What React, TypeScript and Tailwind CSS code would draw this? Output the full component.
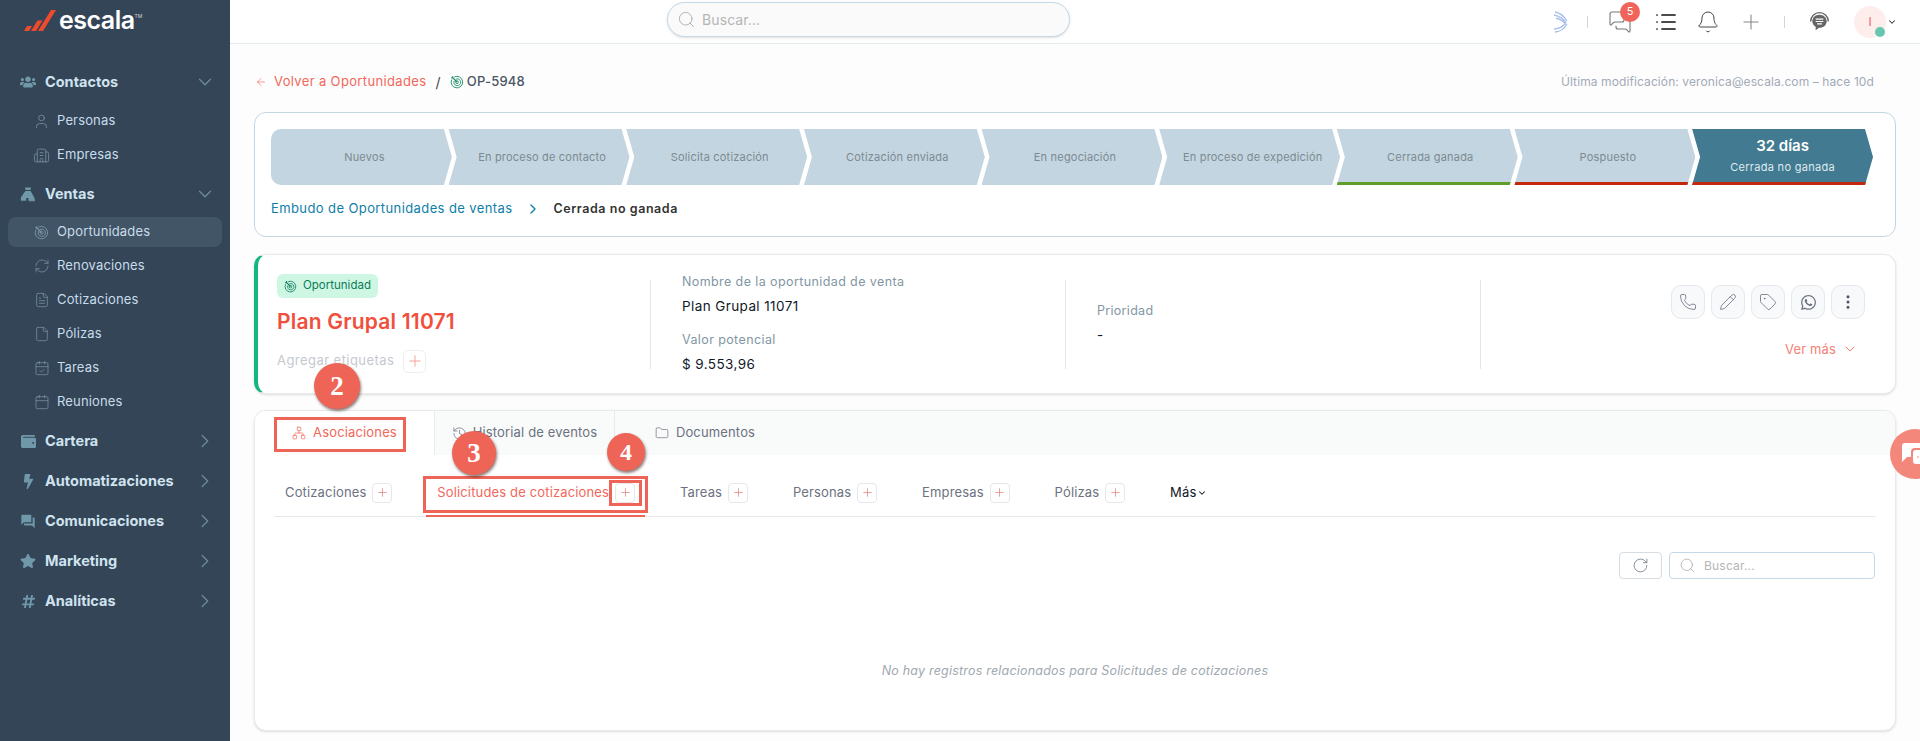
import React from 'react'
import {
  Bell, Building2, Calendar, CalendarCheck, ChevronDown, ChevronRight, File, FileText, Folder, History, List,
  MessagesSquare, MoreVertical, Network, Pencil, Phone, Plus, RefreshCw, RotateCw, Search, Tag, User, ArrowLeft,
} from 'lucide-react'
import { FaBolt, FaHashtag, FaStar, FaUsers, FaWallet, FaWhatsapp } from 'react-icons/fa'
import { MdForum } from 'react-icons/md'

const TargetIcon = ({ className }: { className?: string }) => (
  <svg viewBox="0 0 16 16" fill="none" stroke="currentColor" strokeWidth="1" className={className}>
    <path d="M5 2.200a6.600 6.600 0 1 1-3 3" />
    <path d="M6.400 4.900a3.900 3.900 0 1 1-1.600 1.700" />
    <circle cx="8" cy="8.200" r="1.600" />
    <path d="M8 8.200 3 3M1.500 3.200l1.500-.2.200-1.600" strokeWidth="1.400" />
  </svg>
)

const VentasIcon = ({ className }: { className?: string }) => (
  <svg viewBox="0 0 18 18" fill="currentColor" className={className}>
    <path d="M5.500 1h7l-.8 3H6.300zM6 5h6l4 7.500V16H9.500v-3H7v3H1v-3.500z" />
    <path d="M10.500 13.500h6.500v1h-6.500zM10.500 15.500h6.500v1h-6.500z" />
  </svg>
)

const Logo = () => (
  <div className="flex items-center h-[43px] pl-6">
    <svg viewBox="0 0 32 21" className="w-8 h-[21px] -mt-[2px] text-[#ef4a2c]" fill="currentColor">
      <path d="M0 21l3-5h5l-3 5zM7 21l6.500-10.500h5L12 21zM14 21 27 0h5L19 21z" />
    </svg>
    <span className="ml-[3px] -mt-[3px] text-[25px] leading-none font-semibold tracking-[-0.5px] text-white">escala</span>
    <span className="text-[5px] text-gray-300 self-start mt-[13px]">TM</span>
  </div>
)

const Section = ({ icon, label, open }: { icon: React.ReactNode; label: string; open?: boolean }) => (
  <div className="flex items-center h-10 pl-[20px] pr-[14px] text-[#cfe3ef]">
    <span className="w-[16px] h-[16px] flex items-center justify-center text-[#6f98a8]">{icon}</span>
    <span className="ml-[9px] text-[14.500px] font-bold">{label}</span>
    {open ? (
      <ChevronDown className="ml-auto w-[22px] h-[22px] text-[#6f8c9c]" strokeWidth={1.300} />
    ) : (
      <ChevronRight className="ml-auto w-[22px] h-[22px] text-[#6f8c9c]" strokeWidth={1.300} />
    )}
  </div>
)

const SubItem = ({ icon, label, active }: { icon: React.ReactNode; label: string; active?: boolean }) => (
  <div className={`flex items-center h-[30px] mx-2 mb-[4px] pl-[25px] rounded-lg text-[13px] tracking-[0.15px] text-[#c7dcea] ${active ? 'bg-[#425567]' : ''}`}>
    <span className="w-[17px] h-[17px] flex items-center justify-center text-[#7b95a3]">{icon}</span>
    <span className="ml-[7px]">{label}</span>
  </div>
)

const Sidebar = () => (
  <aside className="w-[230px] h-[741px] shrink-0 bg-[#344557]">
    <Logo />
    <nav className="pt-[19px]">
      <Section icon={<FaUsers className="w-4 h-4" />} label="Contactos" open />
      <div className="pt-[4px]">
        <SubItem icon={<User className="w-[17px] h-[17px]" strokeWidth={1.100} />} label="Personas" />
        <SubItem icon={<Building2 className="w-[17px] h-[17px]" strokeWidth={1.100} />} label="Empresas" />
      </div>
      <Section icon={<VentasIcon className="w-[17px] h-[17px]" />} label="Ventas" open />
      <div className="pt-[3px]">
        <SubItem icon={<TargetIcon className="w-[15px] h-[15px]" />} label="Oportunidades" active />
        <SubItem icon={<RefreshCw className="w-[16px] h-[16px]" strokeWidth={1.100} />} label="Renovaciones" />
        <SubItem icon={<FileText className="w-[16px] h-[16px]" strokeWidth={1.100} />} label="Cotizaciones" />
        <SubItem icon={<File className="w-[16px] h-[16px]" strokeWidth={1.100} />} label="Pólizas" />
        <SubItem icon={<CalendarCheck className="w-[16px] h-[16px]" strokeWidth={1.100} />} label="Tareas" />
        <SubItem icon={<Calendar className="w-[16px] h-[16px]" strokeWidth={1.100} />} label="Reuniones" />
      </div>
      <Section icon={<FaWallet className="w-[15px] h-[15px]" />} label="Cartera" />
      <Section icon={<FaBolt className="w-[15px] h-[15px]" />} label="Automatizaciones" />
      <Section icon={<MdForum className="w-[17px] h-[17px]" />} label="Comunicaciones" />
      <Section icon={<FaStar className="w-[16px] h-[16px]" />} label="Marketing" />
      <Section icon={<FaHashtag className="w-[15px] h-[15px]" />} label="Analíticas" />
    </nav>
  </aside>
)

const Topbar = () => (
  <header className="flex items-center h-[44px] border-b border-[#e3ebeb] bg-white">
    <div className="flex items-center ml-[437px] w-[403px] h-[35px] -mt-[4px] px-[9px] rounded-[18px] border border-[#c5d8e6] bg-[#fafafa] shadow-sm">
      <Search className="w-[19px] h-[19px] text-[#a8a8a8]" strokeWidth={1.100} />
      <span className="ml-[6px] text-[14px] tracking-[0.1px] text-[#b5b5b5]">Buscar...</span>
    </div>
    <div className="flex items-center ml-auto pr-[23px]">
      <svg viewBox="0 0 16 22" className="w-[16px] h-[24px] text-[#a9c0ee]" fill="none" stroke="currentColor" strokeWidth="1.300">
        <path d="M2 1c5 1 9 4 12 9M1 4c5 1 9 3 12 8M3 7c4 1 7 3 10 6M2 21c5 0 9-3 12-8M1 18c5 0 8-2 11-5" />
      </svg>
      <span className="ml-[18px] w-px h-[12px] bg-[#d5d5d5]" />
      <span className="relative ml-[20px] w-[24px] h-[24px] flex items-center">
        <MessagesSquare className="w-[24px] h-[24px] text-[#777777]" strokeWidth={1.100} />
        <span className="absolute -top-[8px] left-[12px] w-[20px] h-[20px] rounded-full bg-[#f0645a] text-white text-[11px] flex items-center justify-center">5</span>
      </span>
      <List className="ml-[22px] w-[24px] h-[24px] text-[#111111]" strokeWidth={1.700} />
      <Bell className="ml-[18px] w-[24px] h-[24px] text-[#444444]" strokeWidth={1} />
      <Plus className="ml-[19px] w-[24px] h-[24px] text-[#888888]" strokeWidth={1.100} />
      <span className="ml-[21px] w-px h-[12px] bg-[#d5d5d5]" />
      <svg viewBox="0 0 24 24" className="ml-[23px] w-[23px] h-[23px] text-[#666666]" fill="currentColor">
        <path d="M12 2a10 10 0 0 0-10 10h1.500a8.500 8.500 0 0 1 17 0H22A10 10 0 0 0 12 2z" />
        <path d="M12 5c-4.200 0-7.500 2.900-7.500 6.800 0 2.500 1.400 4.600 3.500 5.800L8 21l3.500-2.400c.2 0 .3 0 .5 0 4.200 0 7.500-3 7.500-6.800S16.200 5 12 5z" />
        <path d="M8 9.500h8M8 12h8M9.500 14.500h5" stroke="#ffffff" strokeWidth="1.200" />
      </svg>
      <span className="relative ml-[23px] w-[32px] h-[32px] rounded-full bg-[#fdeeec] flex items-center justify-center">
        <span className="text-[12px] text-[#f0645a]">I</span>
        <span className="absolute right-[1px] bottom-[1px] w-[10px] h-[10px] rounded-full bg-[#67c6ad]" />
      </span>
      <ChevronDown className="ml-[1px] w-[10px] h-[10px] text-[#333333]" strokeWidth={2.500} />
    </div>
  </header>
)

const stages = [
  { label: 'Nuevos', border: '' },
  { label: 'En proceso de contacto', border: '' },
  { label: 'Solicita cotización', border: '' },
  { label: 'Cotización enviada', border: '' },
  { label: 'En negociación', border: '' },
  { label: 'En proceso de expedición', border: '' },
  { label: 'Cerrada ganada', border: 'pt-[3px] border-b-[3px] border-[#5f9e2a]' },
  { label: 'Pospuesto', border: 'pt-[3px] border-b-[3px] border-[#c4280c]' },
]

const chevron = '[clip-path:polygon(0_0,calc(100%_-_8px)_0,100%_50%,calc(100%_-_8px)_100%,0_100%,8px_50%)]'

const Pipeline = () => (
  <div className="flex h-[56px]">
    {stages.map((s, i) => (
      <div
        key={s.label}
        className={`flex-1 flex items-center justify-center bg-[#c3d5e0] text-[11px] tracking-[0.2px] text-[#7d8a90] ${s.border} ${
          i === 0
            ? 'rounded-l-[10px] [clip-path:polygon(0_0,calc(100%_-_8px)_0,100%_50%,calc(100%_-_8px)_100%,0_100%)]'
            : `-ml-[3.250px] ${chevron}`
        }`}
      >
        <span className="ml-[6px]">{s.label}</span>
      </div>
    ))}
    <div className={`flex-1 -ml-[3.250px] flex flex-col items-center justify-center bg-[#417a91] text-white border-b-[3px] border-[#c4280c] ${chevron}`}>
      <span className="text-[15px] leading-[20px] font-semibold">32 días</span>
      <span className="text-[11px] leading-[16px] mt-[3px] tracking-[0.3px] text-[#dfeaf0]">Cerrada no ganada</span>
    </div>
  </div>
)

const ActionButton = ({ children }: { children: React.ReactNode }) => (
  <span className="w-[34px] h-[34px] rounded-[10px] border border-[#e5e8ec] bg-[#f8f9fb] flex items-center justify-center text-[#6b7280]">
    {children}
  </span>
)

const InfoCard = () => (
  <section className="flex h-[140px] mt-[17px] pt-[19px] rounded-[12px] border border-[#e8eaec] border-l-[4px] border-l-[#14b87f] bg-white shadow-sm">
    <div className="w-[392px] pl-[19px] shrink-0">
      <span className="inline-flex items-center h-[24px] px-[7px] rounded-[6px] bg-[#cdf7e3] text-[11.500px] text-[#0e7a5c]">
        <TargetIcon className="w-[13px] h-[13px] mr-[6px]" />
        Oportunidad
      </span>
      <h1 className="mt-[9px] text-[21px] leading-[28px] tracking-[0.2px] font-semibold text-[#f04f3c]">Plan Grupal 11071</h1>
      <div className="flex items-center mt-[14px] text-[13px] tracking-[0.45px] text-[#c5c9cf]">
        Agregar etiquetas
        <span className="ml-[9px] w-[23px] h-[23px] rounded-[5px] border border-[#eceef0] flex items-center justify-center">
          <Plus className="w-[18px] h-[18px] text-[#f3a199]" strokeWidth={1.300} />
        </span>
      </div>
    </div>
    <div className="w-[415px] h-[89px] mt-[6px] shrink-0 border-l border-[#e2e6ea] pl-[31px] tracking-[0.4px]">
      <p className="-mt-[6px] text-[12.500px] leading-[16px] text-[#8296a3]">Nombre de la oportunidad de venta</p>
      <p className="mt-[6px] text-[13.500px] leading-[20px] text-[#111827]">Plan Grupal 11071</p>
      <p className="mt-[16px] text-[12.500px] leading-[16px] text-[#8296a3]">Valor potencial</p>
      <p className="mt-[6px] text-[13.500px] leading-[20px] text-[#111827]">$ 9.553,96</p>
    </div>
    <div className="w-[415px] h-[89px] mt-[6px] shrink-0 border-l border-[#e2e6ea] pl-[31px] tracking-[0.3px]">
      <p className="mt-[23px] text-[12.500px] leading-[16px] text-[#8296a3]">Prioridad</p>
      <p className="mt-[6px] text-[13.500px] leading-[20px] text-[#111827]">-</p>
    </div>
    <div className="flex-1 h-[89px] mt-[6px] border-l border-[#e2e6ea] pr-[30px] flex flex-col items-end">
      <div className="flex gap-[6px] mt-[5px]">
        <ActionButton><Phone className="w-[18px] h-[18px]" strokeWidth={1.100} /></ActionButton>
        <ActionButton><Pencil className="w-[18px] h-[18px]" strokeWidth={1.100} /></ActionButton>
        <ActionButton><Tag className="w-[18px] h-[18px]" strokeWidth={1.100} /></ActionButton>
        <ActionButton><FaWhatsapp className="w-[17px] h-[17px]" /></ActionButton>
        <ActionButton><MoreVertical className="w-[18px] h-[18px] text-[#4b5563]" strokeWidth={2} /></ActionButton>
      </div>
      <div className="flex items-center mt-[20px] mr-[7px] text-[13px] leading-[20px] tracking-[0.15px] text-[#f47f74]">
        Ver más
        <ChevronDown className="ml-[6px] w-[16px] h-[16px]" strokeWidth={1.500} />
      </div>
    </div>
  </section>
)

const subTabs = ['Cotizaciones', 'Solicitudes de cotizaciones', 'Tareas', 'Personas', 'Empresas', 'Pólizas']

const TabsPanel = () => (
  <section className="h-[321px] mt-[16px] rounded-[12px] border border-[#e8eaec] bg-white shadow-sm overflow-hidden">
    <div className="flex h-[44px] bg-[#f9fafa] text-[13px] tracking-[0.15px]">
      <div className="w-[180px] flex items-center justify-center gap-[7px] bg-white border-r border-[#e8eaec] text-[#f2675a]">
        <Network className="w-[14px] h-[14px]" strokeWidth={1.200} />
        Asociaciones
      </div>
      <div className="w-[180px] flex items-center justify-center gap-[6px] border-r border-[#e8eaec] text-[#6b7280]">
        <History className="w-[15px] h-[15px]" strokeWidth={1.200} />
        Historial de eventos
      </div>
      <div className="w-[180px] flex items-center justify-center gap-[7px] text-[#6b7280]">
        <Folder className="w-[14px] h-[14px]" strokeWidth={1.200} />
        Documentos
      </div>
    </div>
    <div className="relative flex items-center h-[62px] mx-[19px] pt-[14px] pl-[11px] gap-[44.800px] border-b border-[#e5e7eb] text-[13px] tracking-[0.15px] text-[#6b7280]">
      {subTabs.map((t) => (
        <div key={t} className={`flex items-center ${t.startsWith('Solicitudes') ? 'text-[#f2675a]' : ''}`}>
          {t}
          <span className="ml-[6px] w-[20px] h-[20px] rounded-[4px] border border-[#e5e7eb] flex items-center justify-center">
            <Plus className="w-[13px] h-[13px] text-[#e58a86]" strokeWidth={1.500} />
          </span>
        </div>
      ))}
      <div className="flex items-center text-[13px] text-[#111827]">
        Más
        <ChevronDown className="ml-[1px] w-[10px] h-[10px]" strokeWidth={2.500} />
      </div>
      <span className="absolute left-[152px] bottom-[-1px] w-[219px] h-[2px] bg-[#ee6457]" />
    </div>
    <div className="flex justify-end gap-[7px] mt-[35px] mx-[20px]">
      <span className="w-[43px] h-[27px] rounded-[4px] border border-[#d5dde2] flex items-center justify-center text-[#6b7280]">
        <RotateCw className="w-[17px] h-[17px]" strokeWidth={1.100} />
      </span>
      <div className="flex items-center w-[206px] h-[27px] px-[9px] rounded-[4px] border border-[#c5d8e6]">
        <Search className="w-[17px] h-[17px] text-[#a8a8a8]" strokeWidth={1.100} />
        <span className="ml-[8px] text-[12px] tracking-[0.2px] text-[#b5b5b5]">Buscar...</span>
      </div>
    </div>
    <p className="mt-[83px] text-center text-[12.500px] italic tracking-[0.2px] text-[#a0a8b0]">
      No hay registros relacionados para Solicitudes de cotizaciones
    </p>
  </section>
)

const Marker = ({ n, className }: { n: number; className: string }) => (
  <span className={`absolute rounded-full bg-[#ee6457] text-white font-bold font-['Liberation_Serif',serif] flex items-center justify-center shadow-[1px_2px_3px_rgba(60,30,20,0.6)] ${className}`}>
    {n}
  </span>
)

export default function App() {
  return (
    <div className="relative flex w-[1920px] h-[741px] overflow-hidden bg-[#fdfdfd] font-['Inter',sans-serif]">
      <Sidebar />
      <main className="flex-1 min-w-0">
        <Topbar />
        <div className="px-6">
          <div className="flex items-center h-5 mt-[28px] text-[13px] tracking-[0.35px]">
            <ArrowLeft className="ml-[1px] w-[12px] h-[12px] text-[#f2675a]" strokeWidth={1.300} />
            <span className="ml-[7px] text-[#f2675a]">Volver a Oportunidades</span>
            <span className="ml-[9px] text-[14px] text-[#444444]">/</span>
            <TargetIcon className="ml-[9px] w-[14px] h-[14px] text-[#148a63]" />
            <span className="ml-[3px] font-medium tracking-[0.2px] text-[#4b5563]">OP-5948</span>
            <span className="ml-auto mr-[22px] text-[12px] tracking-[0.1px] text-[#a2aab8]">
              Última modificación: veronica@escala.com – hace 10d
            </span>
          </div>
          <section className="h-[125px] mt-[20px] pl-[16px] pr-[22px] pt-[16px] rounded-[12px] border border-[#c3d7e3] bg-white">
            <Pipeline />
            <div className="flex items-center mt-[15px] h-[18px] text-[13px] tracking-[0.4px]">
              <span className="text-[#0f7ea8]">Embudo de Oportunidades de ventas</span>
              <ChevronRight className="ml-[12px] w-[16px] h-[16px] text-[#0f7ea8]" strokeWidth={2} />
              <span className="ml-[13px] font-semibold text-[12.500px] tracking-[0.55px] text-[#333333]">Cerrada no ganada</span>
            </div>
          </section>
          <InfoCard />
          <TabsPanel />
        </div>
      </main>

      {/* annotations laid over the screenshot */}
      <span className="absolute left-[274px] top-[417px] w-[132px] h-[35px] border-[3px] border-[#ee6457]" />
      <span className="absolute left-[423px] top-[476px] w-[225px] h-[37px] border-[3px] border-[#ee6457]" />
      <span className="absolute left-[609px] top-[480px] w-[33px] h-[26px] border-[3px] border-[#ee6457]" />
      <Marker n={2} className="left-[314px] top-[363px] w-[46px] h-[46px] text-[27px]" />
      <Marker n={3} className="left-[452px] top-[431px] w-[44px] h-[44px] text-[27px]" />
      <Marker n={4} className="left-[607px] top-[433px] w-[38px] h-[38px] text-[24px]" />

      <span className="absolute left-[1890px] top-[429px] w-[50px] h-[50px] rounded-full bg-[#f4877b] flex items-center pl-[12px]">
        <svg viewBox="0 0 30 22" className="w-[30px] h-[22px] shrink-0" fill="#ffffff">
          <path d="M3 0h14a3 3 0 0 1 3 3v2h-7a4 4 0 0 0-4 4v5H5l-5 5V3a3 3 0 0 1 3-3z" />
          <rect x="11" y="7" width="19" height="14" rx="3" />
          <path d="M15 14h2M19 14h2M23 14h2" stroke="#f4877b" strokeWidth="1.200" />
        </svg>
      </span>
    </div>
  )
}
